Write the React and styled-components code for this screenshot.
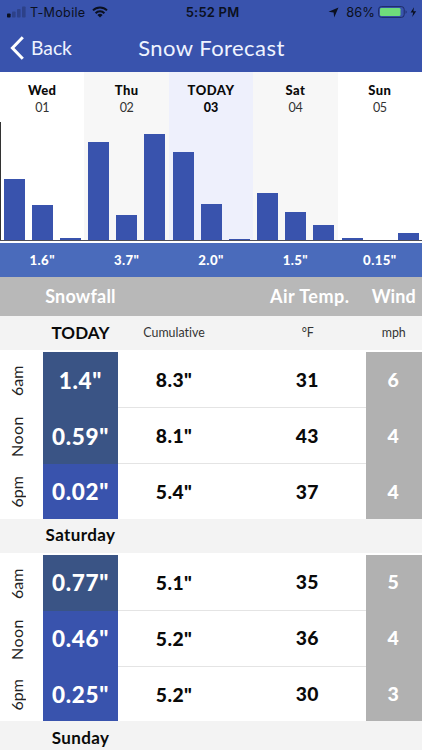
import React from "react";
import styled, { createGlobalStyle } from "styled-components";

const GlobalStyle = createGlobalStyle`
  * { box-sizing: border-box; }
  body { margin: 0; background: #fff; }
`;

const Screen = styled.main`
  width: 422px;
  height: 750px;
  overflow: hidden;
  display: flex;
  flex-direction: column;
  background: #fff;
  color: #0a0a0a;
  font-family: Lato, "Open Sans", sans-serif;
  font-variant-ligatures: none;
  white-space: nowrap;
`;

const Header = styled.header`
  height: 72px;
  flex: none;
  background: #3953ad;
`;

const StatusBar = styled.div`
  height: 24px;
  display: grid;
  grid-template-columns: 1fr auto 1fr;
  align-items: center;
  padding: 0 5px 0 7px;
  color: #0b1020;
  font-family: Inter, sans-serif;
`;

const StatusGroup = styled.div`
  display: flex;
  align-items: center;
  justify-content: ${(p) => (p.$end ? "flex-end" : "flex-start")};
`;

const Carrier = styled.span`
  margin: 0 7px 0 4px;
  font-size: 12.6px;
  letter-spacing: 0.3px;
`;

const Clock = styled.span`
  font-weight: 600;
  font-size: 13px;
  letter-spacing: 0.2px;
  padding-left: 1px;
`;

const Percent = styled.span`
  margin: 0 3px 0 7px;
  font-size: 12.8px;
  letter-spacing: 0.1px;
`;

const NavBar = styled.nav`
  height: 48px;
  display: grid;
  grid-template-columns: 100px 1fr 100px;
  align-items: center;
  padding-left: 10px;
  color: #eff3ff;
`;

const BackButton = styled.button`
  display: flex;
  align-items: center;
  gap: 7px;
  padding: 0 0 1px;
  border: 0;
  background: none;
  color: inherit;
  font: 19.3px Lato, sans-serif;
`;

const Title = styled.h1`
  margin: 0;
  font-size: 22px;
  font-weight: 400;
  letter-spacing: 0.45px;
  text-align: center;
  padding: 0 9px 2px 0;
`;

const Chart = styled.section`
  height: 169px;
  flex: none;
  display: grid;
  grid-template-columns: repeat(5, 1fr);
  border-bottom: 1px solid #4d4e58;
  background: linear-gradient(#333, #333) 0 100% / 1px 118px no-repeat;
`;

const DayColumn = styled.div`
  display: flex;
  flex-direction: column;
  align-items: center;
  padding-top: 10px;
  background: ${(p) => p.$fill};
`;

const DayName = styled.div`
  font-size: 13px;
  line-height: 17px;
  font-weight: 900;
  letter-spacing: ${(p) => (p.$today ? "0.5px" : "0.4px")};
`;

const DayDate = styled.div`
  font-size: 12.5px;
  line-height: 18px;
  letter-spacing: ${(p) => (p.$today ? "0" : "-0.4px")};
  font-weight: ${(p) => (p.$today ? 900 : 400)};
  color: ${(p) => (p.$today ? "#0a0a0a" : "#333")};
`;

const Bars = styled.div`
  flex: 1;
  width: 100%;
  display: grid;
  grid-template-columns: repeat(3, 21px);
  justify-content: space-between;
  align-items: end;
  padding: 0 3.4px 0 4px;
`;

const Bar = styled.div`
  height: ${(p) => p.$height}px;
  background: #3953ad;
`;

const Totals = styled.div`
  height: 34px;
  margin-top: 2px;
  flex: none;
  display: grid;
  grid-template-columns: repeat(5, 1fr);
  align-items: center;
  text-align: center;
  background: #4a6bbb;
  color: #fff;
  font-size: 13.2px;
  font-weight: 900;
  letter-spacing: 0.4px;
`;

const columns = "43px 75px 112px 20px 115.5px 56.5px";

const TableHead = styled.div`
  height: 39px;
  flex: none;
  display: grid;
  grid-template-columns: ${columns};
  align-items: center;
  text-align: center;
  background: #b8b8b8;
  color: #fff;
  font-size: 18px;
  font-weight: 700;
  padding-bottom: 2px;
`;

const HeadLabel = styled.div`
  grid-column: ${(p) => p.$column};
  letter-spacing: ${(p) => p.$track || 0}px;
  padding-left: ${(p) => p.$shift || 0}px;
`;

const DayBand = styled.div`
  height: 34px;
  flex: none;
  display: grid;
  grid-template-columns: ${columns};
  align-items: center;
  text-align: center;
  background: #f3f3f3;
  margin-bottom: 2px;
`;

const BandTitle = styled.div`
  grid-column: 2;
  display: flex;
  justify-content: center;
  font-size: 17px;
  font-weight: 700;
  letter-spacing: ${(p) => (p.$today ? 0.1 : 0.4)}px;
  padding-bottom: 2px;
`;

const Unit = styled.div`
  grid-column: ${(p) => p.$column};
  font-size: 12.4px;
  color: #333;
  padding-bottom: 1px;
`;

const ForecastRow = styled.div`
  height: ${(p) => (p.$last ? 54.5 : 56)}px;
  flex: none;
  display: grid;
  grid-template-columns: 43px 75px 247.5px 56.5px;
`;

const TimeLabel = styled.div`
  display: flex;
  align-items: center;
  justify-content: center;
  writing-mode: vertical-rl;
  transform: rotate(180deg);
  width: 32px;
  font-size: 16px;
  letter-spacing: ${(p) => (p.$noon ? 0.5 : 0)}px;
  color: #222;
  padding-bottom: ${(p) => (p.$noon ? 1 : 2)}px;
`;

const SnowCell = styled.div`
  display: flex;
  align-items: center;
  justify-content: center;
  background: ${(p) => (p.$heavy ? "#3a5485" : "#3953ad")};
  color: #fff;
  font-size: 22.5px;
  font-weight: 900;
  letter-spacing: 0.7px;
  padding-top: ${(p) => (p.$last ? 1 : 0)}px;
`;

const Readings = styled.div`
  display: grid;
  grid-template-columns: 112px 20px 115.5px;
  align-items: center;
  text-align: center;
  border-bottom: ${(p) => (p.$last ? 0 : 1)}px solid #e4e4e4;
  padding-top: ${(p) => (p.$last ? 1 : 0)}px;
`;

const Reading = styled.div`
  font-size: 19.3px;
  font-weight: 900;
  letter-spacing: 0.4px;
`;

const Temperature = styled(Reading)`
  grid-column: 3;
  padding: 0 1px 1px 0;
`;

const WindCell = styled.div`
  display: flex;
  align-items: center;
  justify-content: center;
  background: #b1b1b1;
  color: #fff;
  font-size: 19.5px;
  font-weight: 900;
  padding: 0 1px ${(p) => (p.$last ? 0 : 2)}px 0;
`;

const days = [
  { name: "Wed", date: "01", total: '1.6"', fill: "transparent", bars: [61, 35, 2] },
  { name: "Thu", date: "02", total: '3.7"', fill: "#f7f7f7", bars: [98, 25, 106.5] },
  { name: "TODAY", date: "03", total: '2.0"', fill: "#eef0fc", bars: [88, 36.3, 1], today: true },
  { name: "Sat", date: "04", total: '1.5"', fill: "#f7f7f7", bars: [47.5, 28.3, 15] },
  { name: "Sun", date: "05", total: '0.15"', fill: "transparent", bars: [1.6, 0, 7] },
];

const today = [
  { time: "6am", snow: '1.4"', sum: '8.3"', temp: 31, wind: 6, heavy: true },
  { time: "Noon", snow: '0.59"', sum: '8.1"', temp: 43, wind: 4, heavy: true },
  { time: "6pm", snow: '0.02"', sum: '5.4"', temp: 37, wind: 4 },
];

const saturday = [
  { time: "6am", snow: '0.77"', sum: '5.1"', temp: 35, wind: 5, heavy: true },
  { time: "Noon", snow: '0.46"', sum: '5.2"', temp: 36, wind: 4 },
  { time: "6pm", snow: '0.25"', sum: '5.2"', temp: 30, wind: 3 },
];

function Signal() {
  return (
    <svg width="19" height="12" viewBox="0 0 19 12" fill="#0b1020">
      <rect x="0" y="7.5" width="3.6" height="4" rx="0.8" />
      <g opacity="0.25">
        <rect x="5" y="5.5" width="3.6" height="6" rx="0.8" />
        <rect x="10" y="3" width="3.6" height="8.5" rx="0.8" />
        <rect x="15" y="0.5" width="3.6" height="11" rx="0.8" />
      </g>
    </svg>
  );
}

function Wifi() {
  return (
    <svg width="16" height="12" viewBox="0 0 16 12" fill="none" stroke="#0b1020" strokeWidth="2">
      <path d="M1 4.4a10 10 0 0 1 14 0M3.6 7.2a6.2 6.2 0 0 1 8.8 0" />
      <path d="M8 11.5 5.4 9a3.7 3.7 0 0 1 5.2 0Z" fill="#0b1020" stroke="none" />
    </svg>
  );
}

function Battery() {
  return (
    <svg width="39" height="12" viewBox="0 0 39 12">
      <rect x="0.6" y="0.6" width="25.6" height="10.8" rx="2.8" fill="none" stroke="#1d2b66" />
      <rect x="2" y="2" width="20.5" height="8" rx="1.3" fill="#6fdc7b" />
      <path d="M27.6 4.2c1.4.6 1.4 3 0 3.6Z" fill="#1d2b66" />
      <path d="M36 1.2 32.6 6.6h2.6L34.2 11l4-5.8h-2.8Z" fill="#0b1020" />
    </svg>
  );
}

function Rows({ data }) {
  return data.map((r, i) => {
    const last = i === data.length - 1;
    return (
      <ForecastRow key={r.time} $last={last}>
        <TimeLabel $noon={r.time === "Noon"}>{r.time}</TimeLabel>
        <SnowCell $heavy={r.heavy} $last={last}>{r.snow}</SnowCell>
        <Readings $last={last}>
          <Reading>{r.sum}</Reading>
          <Temperature>{r.temp}</Temperature>
        </Readings>
        <WindCell $last={last}>{r.wind}</WindCell>
      </ForecastRow>
    );
  });
}

export default function App() {
  return (
    <Screen>
      <GlobalStyle />
      <Header>
        <StatusBar>
          <StatusGroup>
            <Signal />
            <Carrier>T-Mobile</Carrier>
            <Wifi />
          </StatusGroup>
          <Clock>5:52 PM</Clock>
          <StatusGroup $end>
            <svg width="11" height="11" viewBox="0 0 11 11" fill="#0b1020">
              <path d="M10.5.5 6.2 10.5 5.6 5.4.5 4.8Z" />
            </svg>
            <Percent>86%</Percent>
            <Battery />
          </StatusGroup>
        </StatusBar>
        <NavBar>
          <BackButton>
            <svg width="14" height="24" viewBox="0 0 14 24" fill="none" stroke="#fff" strokeWidth="3">
              <path d="M12.8 1.2 2.4 12l10.4 10.8" />
            </svg>
            Back
          </BackButton>
          <Title>Snow Forecast</Title>
        </NavBar>
      </Header>
      <Chart>
        {days.map((d) => (
          <DayColumn key={d.name} $fill={d.fill}>
            <DayName $today={d.today}>{d.name}</DayName>
            <DayDate $today={d.today}>{d.date}</DayDate>
            <Bars>
              {d.bars.map((h, i) => (
                <Bar key={i} $height={h} />
              ))}
            </Bars>
          </DayColumn>
        ))}
      </Chart>
      <Totals>
        {days.map((d) => (
          <span key={d.name}>{d.total}</span>
        ))}
      </Totals>
      <TableHead>
        <HeadLabel $column="2" $track={0.2}>Snowfall</HeadLabel>
        <HeadLabel $column="5" $track={0.5} $shift={4}>Air Temp.</HeadLabel>
        <HeadLabel $column="6" $track={0.1}>Wind</HeadLabel>
      </TableHead>
      <DayBand>
        <BandTitle $today>TODAY</BandTitle>
        <Unit $column="3">Cumulative</Unit>
        <Unit $column="5">°F</Unit>
        <Unit $column="6">mph</Unit>
      </DayBand>
      <Rows data={today} />
      <DayBand>
        <BandTitle>Saturday</BandTitle>
      </DayBand>
      <Rows data={saturday} />
      <DayBand>
        <BandTitle>Sunday</BandTitle>
      </DayBand>
    </Screen>
  );
}
